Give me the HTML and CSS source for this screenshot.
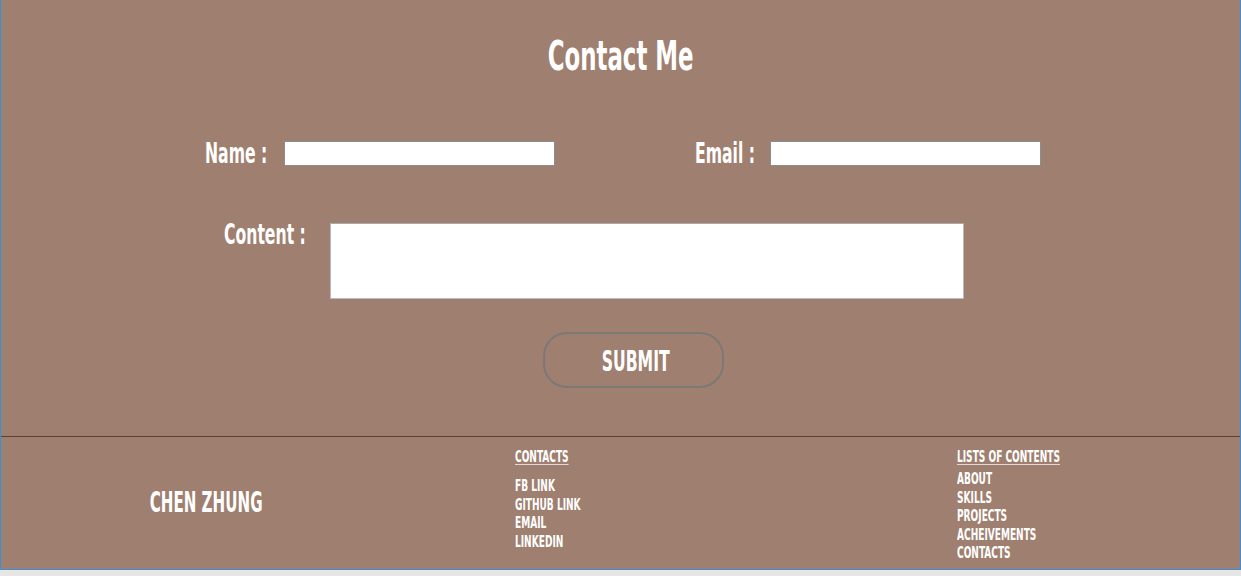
FILE: index.html
```html
<!DOCTYPE html>
<html lang="en">
<head>
<meta charset="utf-8">
<title>Contact Me</title>
<link rel="stylesheet" href="styles.css">
</head>
<body>
<div class="page">
  <section class="contact">
    <h1 class="title"><span class="cond mid wide">Contact Me</span></h1>
    <form class="form" onsubmit="return false">
      <div class="row row-top">
        <label class="field">
          <span class="label"><span class="cond">Name :</span></span>
          <input class="input" type="text">
        </label>
        <label class="field field-email">
          <span class="label label-email"><span class="cond">Email :</span></span>
          <input class="input" type="email">
        </label>
      </div>
      <div class="row row-content">
        <span class="label label-content"><span class="cond">Content :</span></span>
        <textarea class="textarea"></textarea>
      </div>
      <div class="row row-submit">
        <button class="submit" type="submit"><span class="cond mid">SUBMIT</span></button>
      </div>
    </form>
  </section>
  <footer class="footer">
    <div class="brand"><span class="cond mid">CHEN ZHUNG</span></div>
    <div class="col col-contacts">
      <div class="col-head"><span class="cond small">CONTACTS</span></div>
      <ul class="links">
        <li><span class="cond small">FB LINK</span></li>
        <li><span class="cond small">GITHUB LINK</span></li>
        <li><span class="cond small">EMAIL</span></li>
        <li><span class="cond small">LINKEDIN</span></li>
      </ul>
    </div>
    <div class="col col-lists">
      <div class="col-head"><span class="cond small">LISTS OF CONTENTS</span></div>
      <ul class="links links-tight">
        <li><span class="cond small">ABOUT</span></li>
        <li><span class="cond small">SKILLS</span></li>
        <li><span class="cond small">PROJECTS</span></li>
        <li><span class="cond small">ACHEIVEMENTS</span></li>
        <li><span class="cond small">CONTACTS</span></li>
      </ul>
    </div>
  </footer>
</div>
</body>
</html>
```
FILE: styles.css
```css
html, body {
  margin: 0;
  padding: 0;
}
body {
  background: #e6e6e6;
  font-family: "DejaVu Sans Condensed", "Liberation Sans", sans-serif;
  font-weight: 700;
  color: #ffffff;
}
.page {
  width: 1241px;
  height: 570px;
  box-sizing: border-box;
  background: #9f7f70;
  border-left: 1px solid #3b8fd8;
  border-right: 1px solid #3b8fd8;
  border-bottom: 1px solid #3b8fd8;
  display: flex;
  flex-direction: column;
}
.cond {
  display: inline-block;
  transform: scaleX(0.6);
  transform-origin: left center;
  white-space: nowrap;
}
.cond.mid {
  transform-origin: center center;
}
.cond.wide {
  transform: scaleX(0.62);
}
.cond.small {
  transform: scaleX(0.67);
}
.contact {
  height: 436px;
  flex: none;
}
.title {
  margin: 0;
  padding-top: 34px;
  font-size: 41px;
  line-height: 44px;
  text-align: center;
  font-weight: 700;
}
.form {
  margin: 0;
}
.row {
  display: flex;
}
.row-top {
  margin-top: 60px;
  align-items: center;
  height: 30px;
}
.field {
  display: flex;
  align-items: center;
}
.label {
  font-size: 29px;
  line-height: 30px;
  display: block;
  overflow: visible;
}
.row-top .field:first-child {
  margin-left: 204px;
}
.row-top .field:first-child .label {
  width: 79px;
}
.field-email {
  margin-left: 140px;
}
.label-email {
  width: 75px;
}
.input {
  width: 271px;
  height: 25px;
  box-sizing: border-box;
  border: 1px solid #8d8d8d;
  background: #ffffff;
  margin: 0;
  padding: 0 4px;
  outline: none;
}
.row-content {
  margin-top: 51px;
  align-items: flex-start;
}
.label-content {
  margin-left: 223px;
  width: 106px;
}
.textarea {
  width: 634px;
  height: 76px;
  margin: 4px 0 0 0;
  box-sizing: border-box;
  border: 1px solid #b9b9c4;
  border-top-color: #a9a9a9;
  background: #ffffff;
  resize: none;
  padding: 2px;
  outline: none;
}
.row-submit {
  margin-top: 33px;
}
.submit {
  margin-left: 542px;
  width: 181px;
  height: 56px;
  box-sizing: border-box;
  border: 2px solid #7d7876;
  border-radius: 24px;
  background: transparent;
  color: #ffffff;
  font-family: inherit;
  font-weight: 700;
  font-size: 29px;
  line-height: 30px;
  padding: 2px 0 0 4px;
  cursor: pointer;
}
.footer {
  flex: 1;
  border-top: 1px solid #5b3f37;
  display: flex;
}
.brand {
  width: 410px;
  flex: none;
  align-self: center;
  text-align: center;
  font-size: 28px;
  line-height: 32px;
  margin-bottom: 1px;
}
.col {
  padding-top: 11px;
  font-size: 15px;
  line-height: 18.6px;
}
.col-contacts {
  margin-left: 104px;
  width: 442px;
  flex: none;
}
.col-head {
  line-height: 18px;
}
.col-head .cond {
  text-decoration: underline;
  text-decoration-color: #e2d8d3;
  text-underline-offset: 2px;
}
.links {
  list-style: none;
  margin: 11px 0 0 0;
  padding: 0;
}
.links-tight {
  margin-top: 4px;
}
.links li {
  height: 18.6px;
}
```
